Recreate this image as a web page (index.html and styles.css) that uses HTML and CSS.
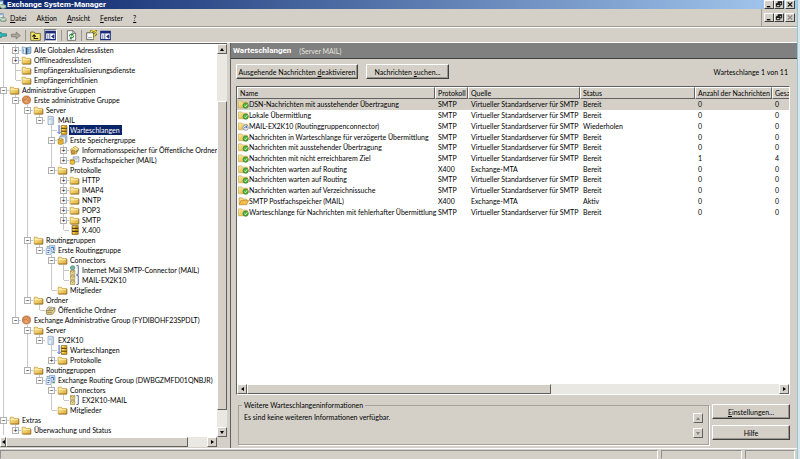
FILE: index.html
```
<!DOCTYPE html>
<html lang="de">
<head>
    <meta charset="utf-8">
    <title>Exchange System-Manager</title>
    <link rel="stylesheet" href="styles.css">
</head>
<body>
    <svg class="defs" aria-hidden="true">
        <linearGradient id="gold" x1="0" y1="0" x2="1" y2="1">
            <stop offset="0" stop-color="#fff3a6"/>
            <stop offset="1" stop-color="#dda52c"/>
        </linearGradient>
        <symbol id="folder" viewBox="0 0 16 16">
            <path d="M1 3.5h5l1.500 2h7v9h-13.500z" fill="url(#gold)" stroke="#b88c2c"/>
            <path d="M2 7h12" stroke="#fffbd0"/>
            <path d="M2 14.500h13v-8" fill="none" stroke="#7a5c1c"/>
        </symbol>
        <symbol id="book" viewBox="0 0 16 16">
            <path d="M1 3l6 1.500v10l-6-1.500z" fill="#e4f0fa" stroke="#5a86a8"/>
            <path d="M15 3l-6 1.500v10l6-1.500z" fill="#a9cbe8" stroke="#3d6d94"/>
            <path d="M8 4v11" stroke="#2c4f70" stroke-width="2"/>
            <path d="M3 6v6M11.500 6v6" stroke="#6b9cc4" stroke-width="1.500"/>
        </symbol>
        <symbol id="group" viewBox="0 0 16 16">
            <circle cx="8" cy="8" r="6.500" fill="#d98a4c" stroke="#a85a28"/>
            <path d="M4 6l4-3 4 3-2 2 3 3-5 2-4-3 2-2z" fill="#e5a672"/>
            <path d="M3 8l5-1 4 5M8 7l2-4" fill="none" stroke="#b86c38"/>
        </symbol>
        <symbol id="server" viewBox="0 0 16 16">
            <path d="M4 2h6l3 1v12h-9z" fill="#c2d4e6" stroke="#8298b0"/>
            <path d="M5 3h4v11h-4z" fill="#eaf3fb"/>
            <path d="M5 5h4M5 7.500h4" stroke="#8da6c0"/>
        </symbol>
        <symbol id="queue" viewBox="0 0 16 16">
            <path d="M2.500 0v12M0 11l2.500 3L5 11" fill="none" stroke="#3b5fd0" stroke-width="1.600"/>
            <path d="M6 1h9v14H6z" fill="#e2a91c" stroke="#6d4c08"/>
            <path d="M6 5.500h9M6 10h9" stroke="#5c4308" stroke-width="1.500"/>
            <path d="M7 2.500h4M7 7.500h4M7 12h4" stroke="#ffe98a" stroke-width="1.500"/>
        </symbol>
        <symbol id="x400" viewBox="0 0 16 16">
            <path d="M4 1h10v14H4z" fill="#d79c1c" stroke="#6d4c08"/>
            <path d="M4 5.500h10M4 10h10" stroke="#4c3808" stroke-width="2"/>
            <path d="M5 3h4M5 7.500h4M5 12.500h4" stroke="#ffe98a" stroke-width="1.500"/>
        </symbol>
        <symbol id="storage" viewBox="0 0 16 16">
            <path d="M5 1h10v10H5z" fill="#d3e2f1" stroke="#6481a0"/>
            <path d="M3 3h10v10H3z" fill="#f4f8fc" stroke="#6481a0"/>
            <ellipse cx="5" cy="7" rx="4" ry="1.500" fill="#ffe07a" stroke="#a4781a"/>
            <path d="M1 7v7q4 2.500 8 0V7q-4 2.500-8 0z" fill="#e8b435" stroke="#a4781a"/>
        </symbol>
        <symbol id="public" viewBox="0 0 16 16">
            <path d="M2 7l7-5 6 4-4 8-8 1z" fill="#f3cf6a" stroke="#9c7424"/>
            <path d="M5 6l6 4M8 3l5 4" stroke="#fff5c5" stroke-width="1.500"/>
            <circle cx="6" cy="11" r="3" fill="#e19b38" stroke="#86602a"/>
            <path d="M10 11l4-3" stroke="#628c4b" stroke-width="2"/>
        </symbol>
        <symbol id="mailbox" viewBox="0 0 16 16">
            <path d="M6 3h9v8H6z" fill="#e9f0f7" stroke="#7186a0"/>
            <path d="M6 3l4.500 4L15 3" fill="none" stroke="#7186a0"/>
            <path d="M1 8v6q3.500 2 7 0V8q-3.500-2-7 0z" fill="#f0c43c" stroke="#9b741a"/>
            <path d="M1 8q3.500 2 7 0" fill="none" stroke="#9b741a"/>
        </symbol>
        <symbol id="pubfolder" viewBox="0 0 16 16">
            <path d="M1 9l4-6 9 1-3 7z" fill="#fbf3cf" stroke="#6f6545"/>
            <path d="M1 9h10l4-5v6l-4 5H2z" fill="#e5cb79" stroke="#6f6545"/>
            <path d="M5 5.500h6M4 7.500h6M3 12h7" stroke="#7c7450"/>
        </symbol>
        <symbol id="routing" viewBox="0 0 16 16">
            <path d="M6 1h9v9H6z" fill="#d3e2f5" stroke="#6080ac"/>
            <path d="M1 6h8v9H1z" fill="#f4f9ff" stroke="#6080ac"/>
            <path d="M3 9h4M3 12h3M9 4h4v4" fill="none" stroke="#2c62c0" stroke-width="1.500"/>
            <path d="M11 12h4M2 3h3" stroke="#528c78" stroke-width="2"/>
        </symbol>
        <symbol id="smtpcon" viewBox="0 0 16 16">
            <path d="M11 1h3v14h-3" fill="none" stroke="#4a5f94" stroke-width="1.500"/>
            <circle cx="5" cy="4.500" r="3.500" fill="#74b7a0" stroke="#39745e"/>
            <path d="M1.500 9h7v6h-7z" fill="#efdc94" stroke="#937b34"/>
            <path d="M1.500 9L5 12l3.500-3" fill="none" stroke="#937b34"/>
        </symbol>
        <symbol id="connector" viewBox="0 0 16 16">
            <path d="M11 1h3v14h-3" fill="none" stroke="#4a5f94" stroke-width="1.500"/>
            <path d="M1.500 1h7v6h-7zM1.500 9h7v6h-7z" fill="#efdc94" stroke="#937b34"/>
            <path d="M1.500 1L5 4l3.500-3M1.500 9L5 12l3.500-3" fill="none" stroke="#937b34"/>
        </symbol>
        <symbol id="q-ready" viewBox="0 0 16 16">
            <path d="M0 3h5l1.500 2H14v9H0z" fill="url(#gold)" stroke="#c2a552"/>
            <circle cx="11.500" cy="10.500" r="4.300" fill="#4fae3e" stroke="#2f7c28"/>
            <path d="M9.500 10.500l1.500 2 3-4" fill="none" stroke="#d8f5ce" stroke-width="1.500"/>
        </symbol>
        <symbol id="q-retry" viewBox="0 0 16 16">
            <path d="M0 3h5l1.500 2H14v9H0z" fill="url(#gold)" stroke="#c2a552"/>
            <circle cx="11.500" cy="10.500" r="4.300" fill="#e9f0fb" stroke="#5d7bb0"/>
            <path d="M9.500 11.500q0-3 4-2M12 8l2 1.500-2 2" fill="none" stroke="#2d50a0" stroke-width="1.200"/>
        </symbol>
        <symbol id="q-active" viewBox="0 0 16 16">
            <path d="M1 13V3h5l1.500 2H13v2" fill="#fbe28b" stroke="#b8872a"/>
            <path d="M1 14l3-7h12l-3 7z" fill="#f6bc4a" stroke="#b07818"/>
        </symbol>
        <symbol id="console" viewBox="5 0 11 16">
            <path d="M1 1h9v9H1z" fill="#eaf3fb" stroke="#4c6a96"/>
            <path d="M2 3h7" stroke="#7fa6c8" stroke-width="2"/>
            <path d="M4 9l6-2 5 3v4l-6 2-5-3z" fill="#a5c3a4" stroke="#4f6d64"/>
            <path d="M4 9l5 3 6-2" fill="none" stroke="#fff"/>
        </symbol>
        <symbol id="panel" viewBox="0 0 16 16">
            <path d="M1 2h14v12H1z" fill="#fff" stroke="#1c2c7c" stroke-width="1.500"/>
            <path d="M1 3.500h14" stroke="#1c2c7c" stroke-width="3"/>
            <path d="M7 5v9" stroke="#1c2c7c"/>
            <path d="M3 7.500h2M3 10h2M3 12h2M13 7v5l-3.500-2.500z" fill="#1c2c7c" stroke="#1c2c7c"/>
        </symbol>
        <symbol id="restore" viewBox="0 0 9 8">
            <path d="M3.500 3V1.500h4v3H6" fill="none" stroke="#000"/>
            <path d="M3 1h5" stroke="#000" stroke-width="1.200"/>
            <path d="M1.500 3.500h4v3h-4z" fill="none" stroke="#000"/>
            <path d="M1 3.500h5" stroke="#000" stroke-width="1.500"/>
        </symbol>
        <symbol id="min" viewBox="0 0 9 8"><path d="M2 6.500h4" stroke="#000" stroke-width="1.500"/></symbol>
        <symbol id="close" viewBox="0 0 9 8"><path d="M2 1.500l5 5M7 1.500l-5 5" stroke="currentColor" stroke-width="1.200"/></symbol>
    </svg>

    <div class="window">
        <header class="titlebar">
            <svg class="app-icon"><use href="#console"/></svg>
            <h1>Exchange System-Manager</h1>
            <div class="controls">
                <button aria-label="Minimieren"><svg><use href="#min"/></svg></button>
                <button aria-label="Wiederherstellen"><svg><use href="#restore"/></svg></button>
                <button class="close" aria-label="Schließen"><svg><use href="#close"/></svg></button>
            </div>
        </header>

        <nav class="menubar">
            <svg class="app-icon"><use href="#console"/></svg>
            <button><u>D</u>atei</button>
            <button>Ak<u>t</u>ion</button>
            <button><u>A</u>nsicht</button>
            <button><u>F</u>enster</button>
            <button><u>?</u></button>
            <div class="controls">
                <button aria-label="Minimieren"><svg><use href="#min"/></svg></button>
                <button aria-label="Wiederherstellen"><svg><use href="#restore"/></svg></button>
                <button class="close" aria-label="Schließen" disabled><svg><use href="#close"/></svg></button>
            </div>
        </nav>

        <div class="toolbar">
            <button aria-label="Zurück"><svg viewBox="4 0 12 16"><path d="M0 8l6-5v3h9v4H6v3z" fill="#2ec4c4" stroke="#0c5c60"/></svg></button>
            <button aria-label="Vorwärts"><svg viewBox="0 0 16 16"><path d="M15 8L9 3v3H2v4h7v3z" fill="#aaa69e" stroke="#77736b"/></svg></button>
            <span class="sep"></span>
            <button aria-label="Eine Ebene nach oben"><svg viewBox="0 0 16 16"><path d="M1 3h5l1.500 2H15v10H1z" fill="#f6e86c" stroke="#4c4814"/><path d="M6 13V7M3.500 9.500L6 7l2.500 2.500M6 12.500h6" fill="none" stroke="#222" stroke-width="1.500"/></svg></button>
            <button class="pressed" aria-label="Konsolenstruktur"><svg><use href="#panel"/></svg></button>
            <span class="sep"></span>
            <button aria-label="Aktualisieren"><svg viewBox="0 0 16 16"><path d="M2 1h8l4 4v10H2z" fill="#fff" stroke="#444"/><path d="M10 1v4h4" fill="none" stroke="#444"/><path d="M5 9q0-3 4-2.500M11 8q0 4-4 3.500M8 4.500l2 2-2 2M8 9.500l-2 2 2 2" fill="none" stroke="#2b8a3c" stroke-width="1.500"/></svg></button>
            <span class="sep"></span>
            <button aria-label="Hilfe"><svg viewBox="0 0 16 16"><path d="M1 4h10v10H1z" fill="#fff" stroke="#333"/><path d="M3 11h6" stroke="#777"/><path d="M7 4q0-3 4-3t4 3q0 2-3 3v2" fill="none" stroke="#4f4a08" stroke-width="3.500"/><path d="M7 4q0-3 4-3t4 3q0 2-3 3v2M12 11v2" fill="none" stroke="#eee04c" stroke-width="2"/></svg></button>
            <button aria-label="Detailbereich"><svg><use href="#panel"/></svg></button>
        </div>

        <main>
            <aside class="tree-pane">
                <nav class="tree">
                    <ul>
                        <li>
                            <ul>
                                <li><div class="node"><button>+</button><svg><use href="#book"/></svg><a href="#">Alle Globalen Adresslisten</a></div></li>
                                <li><div class="node"><button>+</button><svg><use href="#folder"/></svg><a href="#">Offlineadresslisten</a></div></li>
                                <li><div class="node"><svg><use href="#folder"/></svg><a href="#">Empfängeraktualisierungsdienste</a></div></li>
                                <li><div class="node"><svg><use href="#folder"/></svg><a href="#">Empfängerrichtlinien</a></div></li>
                            </ul>
                        </li>
                        <li>
                            <div class="node"><button>−</button><svg><use href="#folder"/></svg><a href="#">Administrative Gruppen</a></div>
                            <ul>
                                <li>
                                    <div class="node"><button>−</button><svg><use href="#group"/></svg><a href="#">Erste administrative Gruppe</a></div>
                                    <ul>
                                        <li>
                                            <div class="node"><button>−</button><svg><use href="#folder"/></svg><a href="#">Server</a></div>
                                            <ul>
                                                <li>
                                                    <div class="node"><button>−</button><svg><use href="#server"/></svg><a href="#">MAIL</a></div>
                                                    <ul>
                                                        <li><div class="node"><svg><use href="#queue"/></svg><a href="#" class="selected">Warteschlangen</a></div></li>
                                                        <li>
                                                            <div class="node"><button>−</button><svg><use href="#storage"/></svg><a href="#">Erste Speichergruppe</a></div>
                                                            <ul>
                                                                <li><div class="node"><button>+</button><svg><use href="#public"/></svg><a href="#">Informationsspeicher für Öffentliche Ordner</a></div></li>
                                                                <li><div class="node"><button>+</button><svg><use href="#mailbox"/></svg><a href="#">Postfachspeicher (MAIL)</a></div></li>
                                                            </ul>
                                                        </li>
                                                        <li>
                                                            <div class="node"><button>−</button><svg><use href="#folder"/></svg><a href="#">Protokolle</a></div>
                                                            <ul>
                                                                <li><div class="node"><button>+</button><svg><use href="#folder"/></svg><a href="#">HTTP</a></div></li>
                                                                <li><div class="node"><button>+</button><svg><use href="#folder"/></svg><a href="#">IMAP4</a></div></li>
                                                                <li><div class="node"><button>+</button><svg><use href="#folder"/></svg><a href="#">NNTP</a></div></li>
                                                                <li><div class="node"><button>+</button><svg><use href="#folder"/></svg><a href="#">POP3</a></div></li>
                                                                <li><div class="node"><button>+</button><svg><use href="#folder"/></svg><a href="#">SMTP</a></div></li>
                                                                <li><div class="node"><svg><use href="#x400"/></svg><a href="#">X.400</a></div></li>
                                                            </ul>
                                                        </li>
                                                    </ul>
                                                </li>
                                            </ul>
                                        </li>
                                        <li>
                                            <div class="node"><button>−</button><svg><use href="#folder"/></svg><a href="#">Routinggruppen</a></div>
                                            <ul>
                                                <li>
                                                    <div class="node"><button>−</button><svg><use href="#routing"/></svg><a href="#">Erste Routinggruppe</a></div>
                                                    <ul>
                                                        <li>
                                                            <div class="node"><button>−</button><svg><use href="#folder"/></svg><a href="#">Connectors</a></div>
                                                            <ul>
                                                                <li><div class="node"><svg><use href="#smtpcon"/></svg><a href="#">Internet Mail SMTP-Connector (MAIL)</a></div></li>
                                                                <li><div class="node"><svg><use href="#connector"/></svg><a href="#">MAIL-EX2K10</a></div></li>
                                                            </ul>
                                                        </li>
                                                        <li><div class="node"><svg><use href="#folder"/></svg><a href="#">Mitglieder</a></div></li>
                                                    </ul>
                                                </li>
                                            </ul>
                                        </li>
                                        <li>
                                            <div class="node"><button>−</button><svg><use href="#folder"/></svg><a href="#">Ordner</a></div>
                                            <ul>
                                                <li><div class="node"><svg><use href="#pubfolder"/></svg><a href="#">Öffentliche Ordner</a></div></li>
                                            </ul>
                                        </li>
                                    </ul>
                                </li>
                                <li>
                                    <div class="node"><button>−</button><svg><use href="#group"/></svg><a href="#">Exchange Administrative Group (FYDIBOHF23SPDLT)</a></div>
                                    <ul>
                                        <li>
                                            <div class="node"><button>−</button><svg><use href="#folder"/></svg><a href="#">Server</a></div>
                                            <ul>
                                                <li>
                                                    <div class="node"><button>−</button><svg><use href="#server"/></svg><a href="#">EX2K10</a></div>
                                                    <ul>
                                                        <li><div class="node"><svg><use href="#queue"/></svg><a href="#">Warteschlangen</a></div></li>
                                                        <li><div class="node"><button>+</button><svg><use href="#folder"/></svg><a href="#">Protokolle</a></div></li>
                                                    </ul>
                                                </li>
                                            </ul>
                                        </li>
                                        <li>
                                            <div class="node"><button>−</button><svg><use href="#folder"/></svg><a href="#">Routinggruppen</a></div>
                                            <ul>
                                                <li>
                                                    <div class="node"><button>−</button><svg><use href="#routing"/></svg><a href="#">Exchange Routing Group (DWBGZMFD01QNBJR)</a></div>
                                                    <ul>
                                                        <li>
                                                            <div class="node"><button>−</button><svg><use href="#folder"/></svg><a href="#">Connectors</a></div>
                                                            <ul>
                                                                <li><div class="node"><svg><use href="#connector"/></svg><a href="#">EX2K10-MAIL</a></div></li>
                                                            </ul>
                                                        </li>
                                                        <li><div class="node"><svg><use href="#folder"/></svg><a href="#">Mitglieder</a></div></li>
                                                    </ul>
                                                </li>
                                            </ul>
                                        </li>
                                    </ul>
                                </li>
                            </ul>
                        </li>
                        <li>
                            <div class="node"><button>−</button><svg><use href="#folder"/></svg><a href="#">Extras</a></div>
                            <ul>
                                <li><div class="node"><button>+</button><svg><use href="#folder"/></svg><a href="#">Überwachung und Status</a></div></li>
                            </ul>
                        </li>
                    </ul>
                </nav>
                <div class="scroll-y">
                    <button class="arrow up" aria-label="Nach oben"></button>
                    <span class="track tree-above"></span>
                    <span class="thumb tree-thumb-y"></span>
                    <span class="track tree-below"></span>
                    <button class="arrow down" aria-label="Nach unten"></button>
                </div>
                <div class="scroll-x">
                    <button class="arrow left" aria-label="Nach links"></button>
                    <span class="thumb tree-thumb-x"></span>
                    <span class="track rest"></span>
                    <button class="arrow right" aria-label="Nach rechts"></button>
                </div>
            </aside>

            <section class="detail">
                <div class="detail-head">
                    <h2>Warteschlangen</h2>
                    <span>(Server MAIL)</span>
                </div>
                <div class="detail-body">
                    <div class="actions">
                        <button class="btn default">Ausgehende Nachrichten <u>d</u>eaktivieren</button>
                        <button class="btn">Nachrichten <u>s</u>uchen...</button>
                        <span class="count">Warteschlange 1 von 11</span>
                    </div>

                    <div class="list">
                        <div class="list-view">
                            <table>
                                <colgroup>
                                    <col class="c-name"><col class="c-proto"><col class="c-source"><col class="c-status"><col class="c-count"><col class="c-size">
                                </colgroup>
                                <thead>
                                    <tr><th>Name</th><th>Protokoll</th><th>Quelle</th><th>Status</th><th>Anzahl der Nachrichten</th><th>Gesa</th></tr>
                                </thead>
                                <tbody>
                                    <tr class="current"><td><svg><use href="#q-ready"/></svg>DSN-Nachrichten mit ausstehender Übertragung</td><td>SMTP</td><td>Virtueller Standardserver für SMTP</td><td>Bereit</td><td>0</td><td>0</td></tr>
                                    <tr><td><svg><use href="#q-ready"/></svg>Lokale Übermittlung</td><td>SMTP</td><td>Virtueller Standardserver für SMTP</td><td>Bereit</td><td>0</td><td>0</td></tr>
                                    <tr><td><svg><use href="#q-retry"/></svg>MAIL-EX2K10 (Routinggruppenconnector)</td><td>SMTP</td><td>Virtueller Standardserver für SMTP</td><td>Wiederholen</td><td>0</td><td>0</td></tr>
                                    <tr><td><svg><use href="#q-ready"/></svg>Nachrichten in Warteschlange für verzögerte Übermittlung</td><td>SMTP</td><td>Virtueller Standardserver für SMTP</td><td>Bereit</td><td>0</td><td>0</td></tr>
                                    <tr><td><svg><use href="#q-ready"/></svg>Nachrichten mit ausstehender Übertragung</td><td>SMTP</td><td>Virtueller Standardserver für SMTP</td><td>Bereit</td><td>0</td><td>0</td></tr>
                                    <tr><td><svg><use href="#q-ready"/></svg>Nachrichten mit nicht erreichbarem Ziel</td><td>SMTP</td><td>Virtueller Standardserver für SMTP</td><td>Bereit</td><td>1</td><td>4</td></tr>
                                    <tr><td><svg><use href="#q-ready"/></svg>Nachrichten warten auf Routing</td><td>X400</td><td>Exchange-MTA</td><td>Bereit</td><td>0</td><td>0</td></tr>
                                    <tr><td><svg><use href="#q-ready"/></svg>Nachrichten warten auf Routing</td><td>SMTP</td><td>Virtueller Standardserver für SMTP</td><td>Bereit</td><td>0</td><td>0</td></tr>
                                    <tr><td><svg><use href="#q-ready"/></svg>Nachrichten warten auf Verzeichnissuche</td><td>SMTP</td><td>Virtueller Standardserver für SMTP</td><td>Bereit</td><td>0</td><td>0</td></tr>
                                    <tr><td><svg><use href="#q-active"/></svg>SMTP Postfachspeicher (MAIL)</td><td>X400</td><td>Exchange-MTA</td><td>Aktiv</td><td>0</td><td>0</td></tr>
                                    <tr><td><svg><use href="#q-ready"/></svg>Warteschlange für Nachrichten mit fehlerhafter Übermittlung</td><td>SMTP</td><td>Virtueller Standardserver für SMTP</td><td>Bereit</td><td>0</td><td>0</td></tr>
                                </tbody>
                            </table>
                        </div>
                        <div class="scroll-x">
                            <button class="arrow left" aria-label="Nach links"></button>
                            <span class="thumb list-thumb"></span>
                            <span class="track rest"></span>
                            <button class="arrow right" aria-label="Nach rechts"></button>
                        </div>
                    </div>

                    <div class="bottom">
                        <fieldset>
                            <legend>Weitere Warteschlangeninformationen</legend>
                            <p>Es sind keine weiteren Informationen verfügbar.</p>
                            <div class="spin">
                                <button class="arrow up" aria-label="Nach oben" disabled></button>
                                <button class="arrow down" aria-label="Nach unten" disabled></button>
                            </div>
                        </fieldset>
                        <div class="side">
                            <button class="btn"><u>E</u>instellungen...</button>
                            <button class="btn">Hilfe</button>
                        </div>
                    </div>
                </div>
            </section>
        </main>

        <footer class="statusbar">
            <span></span>
            <span></span>
            <span></span>
        </footer>
    </div>
</body>
</html>
```
FILE: styles.css
```
* { box-sizing: border-box; }
body { margin: 0; height: 100vh; display: flex; padding-right: 3px; background: linear-gradient(to left, #d9e6ee 2px, #8ccbd6 2px, #8ccbd6 3px, #d4d0c8 3px); font: 7px/10px Lato, "Liberation Sans", sans-serif; color: #000; overflow: hidden; }
.defs { position: absolute; width: 0; height: 0; }
h1, h2, p, ul { margin: 0; padding: 0; font-size: inherit; }
button { margin: 0; padding: 0; border: 0; background: none; font: inherit; color: inherit; }
a { color: inherit; text-decoration: none; }
svg { display: block; width: 11px; height: 11px; flex: none; }

.window { flex: 1; min-width: 0; display: flex; flex-direction: column; background: #d4d0c8; }

/* title bar, menu and toolbar */
.titlebar { height: 9px; flex: none; display: flex; align-items: center; background: linear-gradient(to right, #0a246a, #a6caf0); color: #fff; }
.titlebar h1 { font-family: Roboto, sans-serif; font-size: 8px; line-height: 9px; }
.app-icon { width: 7px; height: 9px; }
.controls { margin-left: auto; display: flex; padding-right: 2px; }
.controls button { width: 10px; height: 9px; background: #d4d0c8; border: 1px solid; border-color: #fff #404040 #404040 #fff; color: #000; }
.controls svg { width: 8px; height: 7px; }
.controls .close { margin-left: 1px; }
.controls .close:disabled { color: #808080; }
.menubar { height: 18px; flex: none; display: flex; align-items: center; border-bottom: 1px solid #a09c94; }
.menubar > .app-icon { margin-right: 3px; }
.menubar > button { margin-right: 10px; }
.menubar .controls { align-self: stretch; align-items: center; border-left: 1px solid #a09c94; padding-left: 2px; }
.toolbar { height: 15px; flex: none; display: flex; align-items: center; gap: 3px; border-top: 1px solid #fff; }
.toolbar button { width: 11px; height: 11px; }
.toolbar button:first-child, .toolbar button:first-child svg { width: 7px; height: 10px; }
.toolbar .pressed { width: 13px; height: 13px; border: 1px solid; border-color: #808080 #fff #fff #808080; background: #ebe9e4; }
.sep { width: 1px; height: 11px; background: #9a968e; margin: 0 1px; }

main { flex: 1; min-height: 0; display: flex; gap: 3px; border-top: 1px solid #fff; }

/* console tree */
.tree-pane { width: 227px; flex: none; display: grid; grid-template: 1fr 11px / 1fr 10px; border-top: 1px solid #606060; background: #d4d0c8; }
.tree { overflow: hidden; background: #fff; padding-top: 1px; }
.tree ul { list-style: none; }
.tree li li { padding-left: 12px; }
.tree li { position: relative; }
.tree li::before { content: ""; position: absolute; left: 3px; top: 0; bottom: 0; border-left: 1px solid #c8c8c8; }
.tree li li::before { left: 15px; }
.tree li li:last-child::before { bottom: auto; height: 5px; }
.node { position: relative; display: flex; align-items: center; height: 10px; padding-left: 9px; white-space: nowrap; }
.node::before { content: ""; position: absolute; left: 4px; top: 5px; width: 5px; border-top: 1px solid #c8c8c8; }
.node button { position: absolute; left: 0; top: 2px; width: 7px; height: 7px; border: 1px solid #b0b0b0; background: #fff; font-size: 7px; line-height: 5px; text-align: center; }
.node svg { width: 11px; height: 10px; margin-right: 1px; }
.node a { padding: 0 2px 0 1px; line-height: 10px; }
.node .selected { background: #0a246a; color: #fff; }

/* scroll bars */
.scroll-y { display: flex; flex-direction: column; }
.scroll-x { display: flex; height: 10px; }
.arrow { width: 10px; height: 10px; flex: none; display: grid; place-items: center; background: #d4d0c8; border: 1px solid; border-color: #fff #606060 #606060 #fff; }
.arrow::before { content: ""; border: 2px solid transparent; }
.arrow.up::before { border-top: 0; border-bottom: 3px solid #000; }
.arrow.down::before { border-bottom: 0; border-top: 3px solid #000; }
.arrow.left::before { border-left: 0; border-right: 3px solid #000; }
.arrow.right::before { border-right: 0; border-left: 3px solid #000; }
.arrow.up:disabled::before { border-bottom-color: #808080; }
.arrow.down:disabled::before { border-top-color: #808080; }
.thumb { background: #d4d0c8; border: 1px solid; border-color: #fff #606060 #606060 #fff; }
.track { background: #eae8e3; }
.rest { flex: 1; }
.tree-above { flex: 47; }
.tree-thumb-y { flex: 311; }
.tree-below { flex: 17; }
.tree-pane .left { width: 6px; }
.tree-thumb-x { width: 84%; }
.list-thumb { width: 55%; }

/* queue list */
.detail { flex: 1; min-width: 0; display: flex; flex-direction: column; border-left: 1px solid #606060; }
.detail-head { height: 15px; flex: none; display: flex; align-items: center; gap: 8px; padding-left: 2px; background: #808080; color: #fff; }
.detail-head h2 { font-family: Roboto, sans-serif; font-size: 8px; }
.detail-head span { color: #e4e2de; }
.detail-body { flex: 1; min-height: 0; display: flex; flex-direction: column; padding: 5px 7px 3px 5px; border-top: 1px solid #404040; }
.btn { height: 15px; border: 1px solid; border-color: #fff #404040 #404040 #fff; box-shadow: inset -1px -1px #9a968e; text-align: center; }
.actions { display: flex; align-items: center; gap: 8px; margin-bottom: 7px; }
.actions .btn { width: 83px; }
.actions .default { width: 122px; }
.count { margin-left: auto; padding-right: 2px; }
.list { flex: 1; min-height: 0; display: flex; flex-direction: column; border: 1px solid; border-color: #606060 #fff #fff #606060; background: #fff; }
.list-view { flex: 1; min-height: 0; overflow: hidden; }
table { table-layout: fixed; width: 610px; height: 130px; border-collapse: separate; border-spacing: 0; }
.c-name { width: 198px; }
.c-proto { width: 33px; }
.c-source { width: 112px; }
.c-status { width: 115px; }
.c-count { width: 77px; }
.c-size { width: 75px; }
th, td { padding: 0 3px; text-align: left; white-space: nowrap; font-weight: normal; }
th { height: 12px; padding: 0 2px; background: #d4d0c8; border: 1px solid; border-color: #fff #606060 #606060 #fff; }
td:first-child { padding-left: 1px; }
td svg { display: inline-block; height: 10px; vertical-align: top; }
.current { background: #d4d0c8; }

/* info box and buttons */
.bottom { display: flex; gap: 3px; margin-top: 5px; }
fieldset { flex: 1; min-width: 0; margin: 0 0 0 2px; padding: 2px 5px; height: 45px; border: 1px solid #a5a198; box-shadow: 1px 1px #fff; display: flex; }
legend { padding: 0 2px; margin-left: -2px; }
.spin { margin-left: auto; display: flex; flex-direction: column; gap: 5px; padding-top: 1px; }
.side { width: 78px; display: flex; flex-direction: column; gap: 6px; padding-top: 4px; }

.statusbar { flex: none; height: 11px; display: flex; gap: 3px; border-top: 1px solid #fff; padding: 1px 2px 0 0; }
.statusbar span { flex: 1; border: 1px solid; border-color: #909090 #fff transparent #909090; }
.statusbar span:nth-child(2) { flex: 0 0 81px; }
.statusbar span:nth-child(3) { flex: 0 0 50px; }
```
